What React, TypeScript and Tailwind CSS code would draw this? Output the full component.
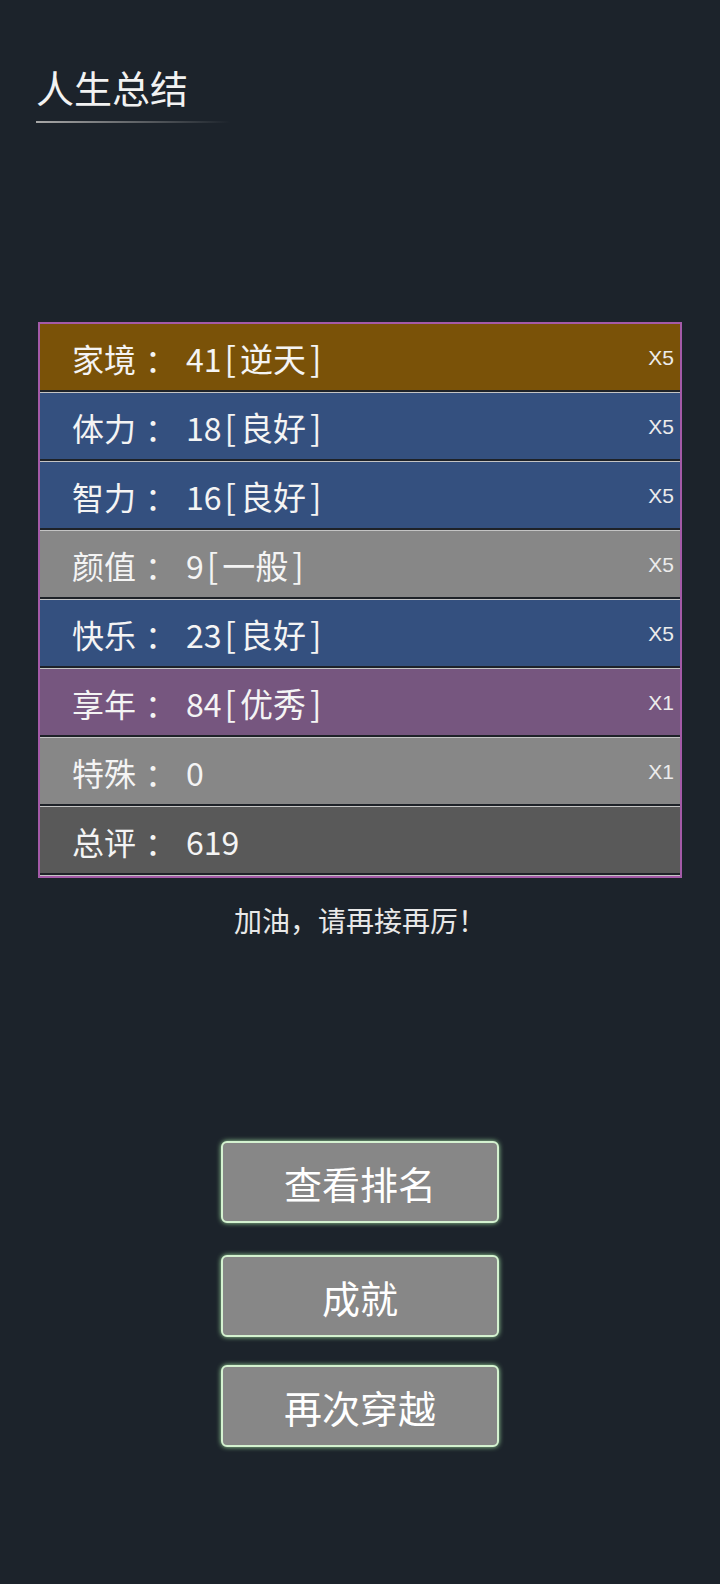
const font = "font-['Noto_Sans_CJK_SC','Noto_Sans',sans-serif]";

interface Stat {
  name: string;
  value: string;
  tag?: string;
  mult?: string;
  bg: string;
}

const stats: Stat[] = [
  { name: "家境", value: "41", tag: "逆天", mult: "X5", bg: "bg-[#7a5208]" },
  { name: "体力", value: "18", tag: "良好", mult: "X5", bg: "bg-[#34507f]" },
  { name: "智力", value: "16", tag: "良好", mult: "X5", bg: "bg-[#34507f]" },
  { name: "颜值", value: "9", tag: "一般", mult: "X5", bg: "bg-[#878787]" },
  { name: "快乐", value: "23", tag: "良好", mult: "X5", bg: "bg-[#34507f]" },
  { name: "享年", value: "84", tag: "优秀", mult: "X1", bg: "bg-[#76567f]" },
  { name: "特殊", value: "0", mult: "X1", bg: "bg-[#878787]" },
  { name: "总评", value: "619", bg: "bg-[#595959]" },
];

const actions = ["查看排名", "成就", "再次穿越"];

export default function App() {
  return (
    <div className={`min-h-[1584px] w-[720px] bg-[#1c232b] text-white ${font}`}>
      <div className="pl-[36px] pt-[64px]">
        <div className="text-[38px] leading-[46px] text-[#f2f2f2]">人生总结</div>
        <div className="mt-[11px] h-[2px] w-[194px] bg-gradient-to-r from-[#a8a8a8] to-transparent" />
      </div>

      <div className="mx-[38px] mt-[199px] border-2 border-[#a45aa8] bg-[#1e2228]">
        {stats.map((s) => (
          <div
            key={s.name}
            className={`flex h-[69px] items-center justify-between border-b border-[#c4c4c4] ${s.bg} pl-[32px] pr-[6px] shadow-[inset_0_-2px_0_#1e2228]`}
          >
            <span className="flex items-center text-[32px] leading-none text-[#f4f4f4]">
              {s.name}
              <span className="inline-block w-[50px] text-center">：</span>
              {s.value}
              {s.tag && (
                <>
                  <span className="ml-[3px] mr-[4px] text-[34px]">[</span>
                  <span className="text-[33px]">{s.tag}</span>
                  <span className="ml-[4px] text-[34px]">]</span>
                </>
              )}
            </span>
            {s.mult && (
              <span className="font-['Liberation_Sans',sans-serif] text-[21px] text-[#ececec]">
                {s.mult}
              </span>
            )}
          </div>
        ))}
      </div>

      <div className="mt-[24px] text-center text-[28px] leading-[36px] text-[#e8e8e8]">
        加油，请再接再厉！
      </div>

      <div className="mt-[203px] flex flex-col items-center">
        {actions.map((a, i) => (
          <button
            key={a}
            className={`flex h-[82px] w-[278px] items-center justify-center rounded-[6px] border-2 border-[#d4f2d0] bg-[#878787] text-[38px] text-white shadow-[0_0_5px_#9fdc9f] ${
              i === 1 ? "mt-[32px]" : i === 2 ? "mt-[28px]" : ""
            }`}
          >
            {a}
          </button>
        ))}
      </div>
    </div>
  );
}
